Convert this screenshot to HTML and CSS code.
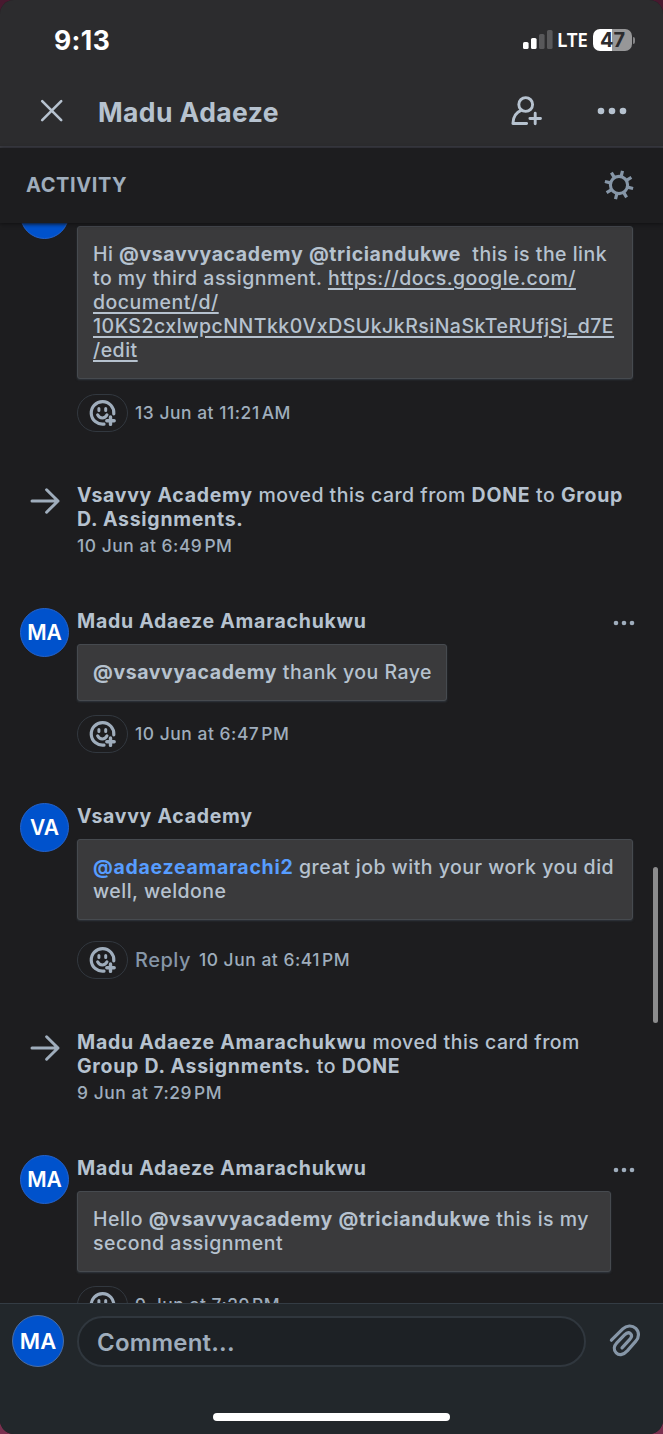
FILE: index.html
```html
<!DOCTYPE html>
<html lang="en">
<head>
<meta charset="utf-8">
<title>Madu Adaeze</title>
<link rel="stylesheet" href="styles.css">
</head>
<body>
<svg class="defs" width="0" height="0">
  <symbol id="smile" viewBox="0 0 28 28">
    <g fill="none" stroke="currentColor" stroke-linecap="round">
      <path d="M24.8 14.8A11.3 11.3 0 1 0 15 25.1" stroke-width="3.2"/>
      <path d="M8.6 15.8Q10.2 18.9 13.3 18.9T18 15.8" stroke-width="3"/>
      <path d="M9.9 9.6v1.8M16.7 9.6v1.8" stroke-width="3"/>
      <path d="M21.5 18v7.4M17.8 21.7h7.4" stroke-width="3.4"/>
    </g>
  </symbol>
  <symbol id="arrow" viewBox="0 0 32 28">
    <path d="M3 14H29M17.6 2.8L29 14L17.6 25.2" fill="none" stroke="currentColor" stroke-width="3" stroke-linecap="round" stroke-linejoin="round"/>
  </symbol>
  <symbol id="dots" viewBox="0 0 22 6">
    <g fill="currentColor"><circle cx="3" cy="3" r="2.3"/><circle cx="11" cy="3" r="2.3"/><circle cx="19" cy="3" r="2.3"/></g>
  </symbol>
</svg>
<div class="screen">
  <header class="top">
    <div class="status">
      <span class="time">9:13</span>
      <div class="status-right">
        <svg class="signal" width="30" height="20" viewBox="0 0 30 20">
          <rect x="0" y="12" width="5.6" height="7" rx="1.6" fill="#fff"/>
          <rect x="8" y="8" width="5.6" height="11" rx="1.6" fill="#fff"/>
          <rect x="16" y="4" width="5.6" height="15" rx="1.6" fill="#58585a"/>
          <rect x="24" y="0" width="5.6" height="19" rx="1.6" fill="#58585a"/>
        </svg>
        <span class="lte">LTE</span>
        <span class="battery">47</span>
        <span class="nub"></span>
      </div>
    </div>
    <div class="titlebar">
      <svg class="close" width="24" height="24" viewBox="0 0 24 24"><path d="M2.2 2.2L21.2 21.2M21.2 2.2L2.2 21.2" stroke="#b6c2cf" stroke-width="2.6" stroke-linecap="round"/></svg>
      <h1>Madu Adaeze</h1>
      <svg class="add-user" width="32" height="30" viewBox="0 0 32 30">
        <g fill="none" stroke="#b6c2cf" stroke-width="2.9" stroke-linecap="round" stroke-linejoin="round">
          <circle cx="14.7" cy="8.5" r="6.9"/>
          <path d="M10.5 14.2C5 16.5 2 21 1.9 27.5H15.6"/>
          <path d="M24.2 17.2V27.8M18.9 22.5H29.5"/>
        </g>
      </svg>
      <svg class="more" width="30" height="8" viewBox="0 0 30 8"><g fill="#b6c2cf"><circle cx="4" cy="4" r="3.3"/><circle cx="15" cy="4" r="3.3"/><circle cx="26" cy="4" r="3.3"/></g></svg>
    </div>
  </header>
  <div class="section">
    <h2>ACTIVITY</h2>
    <svg width="30" height="30" viewBox="-15 -15 30 30">
      <g fill="none" stroke="#8696a7">
        <circle r="8.6" stroke-width="3.1"/>
        <path stroke-width="3.2" d="M2.1 -8.5L3.5 -14.1M7.4 -4.6L12.4 -7.6M8.5 2.1L14.1 3.5M4.6 7.4L7.6 12.4M-2.1 8.5L-3.5 14.1M-7.4 4.6L-12.4 7.6M-8.5 -2.1L-14.1 -3.5M-4.6 -7.4L-7.6 -12.4"/>
      </g>
    </svg>
  </div>

  <main class="feed">
    <article class="entry comment">
      <div class="avatar"></div>
      <div class="content">
        <div class="name"></div>
        <div class="bubble wide">Hi <b>@vsavvyacademy</b> <b>@triciandukwe</b>&nbsp; this is the link<br>to my third assignment. <a>https://docs.google.com/</a><br><a>document/d/</a><br><a>10KS2cxIwpcNNTkk0VxDSUkJkRsiNaSkTeRUfjSj_d7E</a><br><a>/edit</a></div>
        <div class="foot"><span class="react"><svg><use href="#smile"/></svg></span><time>13 Jun at 11:21<i></i>AM</time></div>
      </div>
    </article>

    <article class="entry moved">
      <svg class="arrow"><use href="#arrow"/></svg>
      <div class="content">
        <p><b>Vsavvy Academy</b> moved this card from <b>DONE</b> to <b>Group<br>D. Assignments.</b></p>
        <time>10 Jun at 6:49<i></i>PM</time>
      </div>
    </article>

    <article class="entry comment">
      <div class="avatar">MA</div>
      <div class="content">
        <div class="name"><b>Madu Adaeze Amarachukwu</b><svg class="dots"><use href="#dots"/></svg></div>
        <div class="bubble short"><b>@vsavvyacademy</b> thank you Raye</div>
        <div class="foot"><span class="react"><svg><use href="#smile"/></svg></span><time>10 Jun at 6:47<i></i>PM</time></div>
      </div>
    </article>

    <article class="entry comment">
      <div class="avatar">VA</div>
      <div class="content">
        <div class="name"><b>Vsavvy Academy</b></div>
        <div class="bubble wide"><b class="me">@adaezeamarachi2</b> great job with your work you did<br>well, weldone</div>
        <div class="foot spaced"><span class="react"><svg><use href="#smile"/></svg></span><span class="reply">Reply</span><time>10 Jun at 6:41<i></i>PM</time></div>
      </div>
    </article>

    <article class="entry moved">
      <svg class="arrow"><use href="#arrow"/></svg>
      <div class="content">
        <p><b>Madu Adaeze Amarachukwu</b> moved this card from<br><b>Group D. Assignments.</b> to <b>DONE</b></p>
        <time>9 Jun at 7:29<i></i>PM</time>
      </div>
    </article>

    <article class="entry comment">
      <div class="avatar">MA</div>
      <div class="content">
        <div class="name"><b>Madu Adaeze Amarachukwu</b><svg class="dots"><use href="#dots"/></svg></div>
        <div class="bubble medium">Hello <b>@vsavvyacademy</b> <b>@triciandukwe</b> this is my<br>second assignment</div>
        <div class="foot"><span class="react"><svg><use href="#smile"/></svg></span><time>9 Jun at 7:29<i></i>PM</time></div>
      </div>
    </article>
    <div class="scrollbar"></div>
  </main>

  <footer class="composer">
    <div class="row">
      <div class="avatar big">MA</div>
      <div class="input">Comment...</div>
      <svg width="32" height="34" viewBox="0 0 32 34">
        <path d="M2.4 16.2L13.8 4.9C17.5 1.3 23.1 .9 26.8 4.4C30.5 8 30.2 13.6 26.8 17.1L18.5 26.6C14.8 30.6 10.4 31.9 7.2 28.8C4.3 25.9 4.9 21.9 7.8 18.8L15.5 10.8C17.5 8.8 19.7 8 21.5 9.7C23.2 11.4 22.6 13.5 20.8 15.4L13 23.8" fill="none" stroke="#8696a7" stroke-width="3.2" stroke-linecap="round" stroke-linejoin="round"/>
      </svg>
    </div>
    <div class="home"></div>
  </footer>
</div>
</body>
</html>
```
FILE: styles.css
```css
* { box-sizing: border-box; }
body {
  margin: 0;
  background: linear-gradient(#48192f 0 50%, #79304f 50%);
  font-family: Inter, "Liberation Sans", sans-serif;
  font-size: 19.5px;
  font-weight: 500;
  line-height: 24px;
  letter-spacing: 0.48px;
  color: #b6c2cf;
  white-space: nowrap;
}
.defs { display: block; }
.screen {
  width: 663px;
  height: 1434px;
  border-radius: 14px;
  overflow: hidden;
  background: #1d1d1f;
  display: flex;
  flex-direction: column;
}
b { font-weight: 750; letter-spacing: 0.73px; }

/* Status and title bar */
.top {
  height: 148px;
  background: #2c2c2e;
  border-bottom: 2px solid #3a3b42;
}
.status {
  height: 76px;
  padding: 26px 28px 0 54px;
  display: flex;
  justify-content: space-between;
  color: #fff;
}
.time { font-size: 26.5px; font-weight: 700; line-height: 28px; letter-spacing: 0.4px; }
.status-right { display: flex; height: 28px; align-items: center; }
.signal { margin-right: 4px; }
.lte { font: 600 19px/28px "Noto Sans", sans-serif; letter-spacing: -0.3px; width: 36px; }
.battery {
  width: 39px;
  height: 22px;
  border-radius: 7px;
  background: linear-gradient(90deg, #fff 19px, #979798 19px);
  color: #2c2c2e;
  font-size: 20px;
  font-weight: 750;
  line-height: 22px;
  text-align: center;
  letter-spacing: 0;
}
.nub { width: 2px; height: 7px; margin-left: 1px; border-radius: 0 3px 3px 0; background: #858587; }
.titlebar { display: flex; align-items: center; height: 70px; padding: 0 36px 0 40px; }
h1 { margin: 2px auto 0 34px; font-size: 26.5px; font-weight: 750; line-height: 32px; letter-spacing: 0.4px; }
.add-user { margin-right: 54px; }

/* Section heading */
.section {
  height: 75px;
  padding: 0 29px 1px 26px;
  display: flex;
  align-items: center;
  justify-content: space-between;
  background: #1d1d1f;
  box-shadow: 0 1px 4px #101012;
  position: relative;
  z-index: 1;
}
h2 { margin: 0; font-size: 20px; font-weight: 700; line-height: 24px; letter-spacing: 0.6px; color: #9fadbc; }

/* Activity feed */
.feed { position: relative; height: 1080px; overflow: hidden; display: flow-root; }
.entry { display: flex; margin-bottom: 50px; }
.entry:first-child { margin-top: -33px; }
.entry:first-child .foot { margin-top: 15px; }
.avatar {
  flex: none;
  width: 49px;
  height: 49px;
  margin: 0 8px 0 20px;
  border: 1px solid #2463cc;
  border-radius: 50%;
  background: #0052cc;
  color: #fff;
  font-size: 21px;
  font-weight: 600;
  line-height: 48px;
  text-align: center;
  letter-spacing: 0;
}
.content { flex: 1; }
.name { height: 36px; padding: 1px 28px 0 0; display: flex; justify-content: space-between; }
.dots { width: 22px; height: 6px; margin-top: 11px; color: #9fadbc; }
.bubble {
  padding: 15px 15px 16px;
  border: 1px solid #464a4f;
  border-radius: 3px;
  background: #3a3a3c;
  box-shadow: 0 1px 2px #30363d;
}
.bubble b { letter-spacing: 0.6px; }
.wide { width: 556px; }
.medium { width: 534px; }
.short { width: 370px; padding: 15.75px 15px; }
.bubble a { text-decoration: underline; text-underline-offset: 3px; text-decoration-thickness: 1.5px; }
.bubble .me { color: #579dff; letter-spacing: 0.7px; }
.foot { display: flex; align-items: center; margin-top: 14px; }
.foot.spaced { margin-top: 21px; }
.react {
  width: 51px;
  height: 38px;
  margin-right: 7px;
  border: 1.5px solid #32383f;
  border-radius: 19px;
  display: flex;
  align-items: center;
  justify-content: center;
  color: #9fadbc;
}
.react svg { width: 28px; height: 28px; }
.reply { color: #8696a7; font-size: 20px; margin-right: 8px; }
time { color: #9fadbc; font-size: 17.4px; letter-spacing: 0.55px; }
time i { display: inline-block; width: 2px; }
.arrow { width: 32px; height: 28px; margin: 5px 16px 0 29px; color: #9fadbc; }
.moved p { margin: 0; padding-top: 0.5px; }
.moved time { display: block; margin-top: 3px; }
.scrollbar {
  position: absolute;
  right: 5px;
  top: 644px;
  width: 5px;
  height: 156px;
  border-radius: 3px;
  background: #8c8c8d;
}

/* Comment composer */
.composer { flex: 1; background: #22272b; border-top: 1px solid #343c44; }
.row { display: flex; align-items: center; padding: 11px 22px 0 12px; }
.avatar.big { width: 52px; height: 52px; margin: 0 13px 0 0; border-color: #4b6ea5; font-size: 22px; line-height: 50px; }
.input {
  width: 509px;
  height: 51px;
  margin-right: 23px;
  padding-left: 18px;
  border: 2px solid #30373e;
  border-radius: 26px;
  background: #1d2125;
  color: #9fadbc;
  font-size: 24px;
  font-weight: 600;
  line-height: 49px;
  letter-spacing: 0.2px;
}
.home { width: 237px; height: 8px; margin: 46px auto 0; border-radius: 4px; background: #fff; }
```
